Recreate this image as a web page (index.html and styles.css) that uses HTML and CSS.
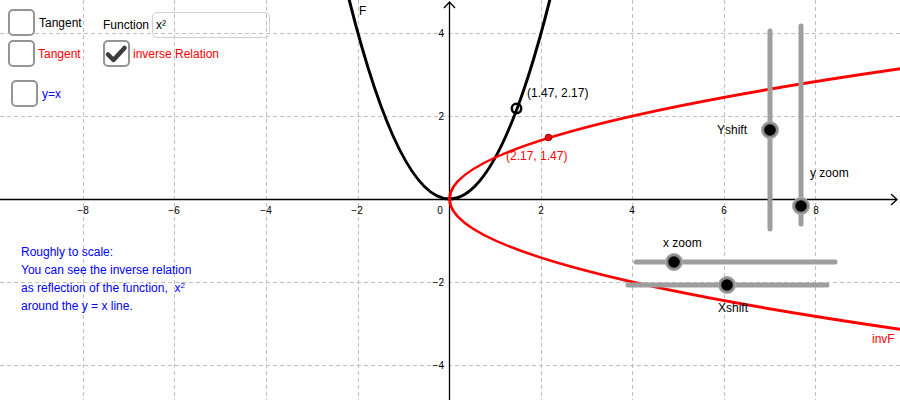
FILE: index.html
```html
<!DOCTYPE html>
<html>
<head>
<meta charset="utf-8">
<link rel="stylesheet" href="styles.css">
</head>
<body>
<div class="applet">
  <svg class="graph" width="900" height="400" viewBox="0 0 900 400" xmlns="http://www.w3.org/2000/svg">
    <g class="grid">
      <line x1="83.5" y1="0" x2="83.5" y2="400"/>
      <line x1="174.5" y1="0" x2="174.5" y2="400"/>
      <line x1="266.5" y1="0" x2="266.5" y2="400"/>
      <line x1="358.5" y1="0" x2="358.5" y2="400"/>
      <line x1="541.5" y1="0" x2="541.5" y2="400"/>
      <line x1="632.5" y1="0" x2="632.5" y2="400"/>
      <line x1="724.5" y1="0" x2="724.5" y2="400"/>
      <line x1="815.5" y1="0" x2="815.5" y2="400"/>
      <line x1="0" y1="33.5" x2="900" y2="33.5"/>
      <line x1="0" y1="116.5" x2="900" y2="116.5"/>
      <line x1="0" y1="282.5" x2="900" y2="282.5"/>
      <line x1="0" y1="365.5" x2="900" y2="365.5"/>
    </g>
    <g class="axes">
      <line x1="0" y1="199.5" x2="897" y2="199.5"/>
      <polyline points="891,194 897,199.5 891,205"/>
      <line x1="449.5" y1="400" x2="449.5" y2="2"/>
      <polyline points="444,8 449.5,2 455,8"/>
    </g>
    <g class="ticks">
      <text x="83" y="214" text-anchor="middle">−8</text>
      <text x="174" y="214" text-anchor="middle">−6</text>
      <text x="266" y="214" text-anchor="middle">−4</text>
      <text x="357" y="214" text-anchor="middle">−2</text>
      <text x="440" y="214" text-anchor="middle">0</text>
      <text x="541" y="214" text-anchor="middle">2</text>
      <text x="632" y="214" text-anchor="middle">4</text>
      <text x="724" y="214" text-anchor="middle">6</text>
      <text x="816" y="214" text-anchor="middle">8</text>
      <text x="444" y="37" text-anchor="end">4</text>
      <text x="444" y="120" text-anchor="end">2</text>
      <text x="444" y="286" text-anchor="end">−2</text>
      <text x="444" y="369" text-anchor="end">−4</text>
    </g>
    <path class="curve-f" d="M348.74,-1.86 Q449.5,399.86 550.26,-1.86"/>
    <path class="curve-inv" d="M918.5,331.8 Q-19.5,199 918.5,66.2"/>
    <circle class="open-pt" cx="516.5" cy="108.5" r="4.7"/>
    <circle class="red-pt" cx="548.5" cy="137.5" r="3.3"/>
    <g class="sliders">
      <line x1="770" y1="31" x2="770" y2="229"/>
      <line x1="801" y1="26" x2="801" y2="224"/>
      <line x1="636" y1="262" x2="835" y2="262"/>
      <line x1="628" y1="285" x2="827" y2="285"/>
    </g>
    <g class="knobs">
      <circle class="ring" cx="770" cy="130" r="8.6"/>
      <circle class="dot" cx="770" cy="130" r="5.8"/>
      <circle class="ring" cx="801" cy="206" r="8.6"/>
      <circle class="dot" cx="801" cy="206" r="5.8"/>
      <circle class="ring" cx="674" cy="262" r="8.6"/>
      <circle class="dot" cx="674" cy="262" r="5.8"/>
      <circle class="ring" cx="727" cy="285" r="8.6"/>
      <circle class="dot" cx="727" cy="285" r="5.8"/>
    </g>
    <g class="labels">
      <text x="359" y="15">F</text>
      <text x="527" y="97">(1.47, 2.17)</text>
      <text class="red" x="506" y="160">(2.17, 1.47)</text>
      <text x="717" y="134">Yshift</text>
      <text x="810" y="177">y zoom</text>
      <text x="663" y="247">x zoom</text>
      <text x="718" y="312">Xshift</text>
      <text class="red" x="872" y="343">invF</text>
    </g>
  </svg>

  <div class="widget w-tangent1">
    <span class="box"></span><span class="lbl">Tangent</span>
  </div>
  <div class="widget w-function">
    <span class="lbl">Function</span><span class="input">x²</span>
  </div>
  <div class="widget w-tangent2">
    <span class="box"></span><span class="lbl red">Tangent</span>
  </div>
  <div class="widget w-inverse">
    <span class="box checked"><svg width="27" height="27" viewBox="0 0 27 27"><polyline points="5,14.5 10.5,20 21.5,8"/></svg></span><span class="lbl red">inverse Relation</span>
  </div>
  <div class="widget w-yx">
    <span class="box"></span><span class="lbl blue">y=x</span>
  </div>

  <div class="note">
    <p>Roughly to scale:</p>
    <p>You can see the inverse relation</p>
    <p>as reflection of the function,&nbsp; x<sup>2</sup></p>
    <p>around the y = x line.</p>
  </div>
</div>
</body>
</html>
```
FILE: styles.css
```css
html, body {
  margin: 0;
  padding: 0;
  background: #ffffff;
}
body {
  font-family: "Liberation Sans", Arial, sans-serif;
  font-size: 12px;
  color: #000;
}
.applet {
  position: relative;
  width: 900px;
  height: 400px;
  overflow: hidden;
}
.graph {
  display: block;
}
.grid line {
  stroke: #c0c0c0;
  stroke-width: 1;
  stroke-dasharray: 4 3;
}
.axes line, .axes polyline {
  stroke: #000;
  stroke-width: 1.3;
  fill: none;
}
.ticks text {
  font-family: "Liberation Sans", Arial, sans-serif;
  font-size: 10px;
  fill: #000;
}
.curve-f {
  fill: none;
  stroke: #000;
  stroke-width: 3;
}
.curve-inv {
  fill: none;
  stroke: #ff0000;
  stroke-width: 3;
}
.open-pt {
  fill: none;
  stroke: #000;
  stroke-width: 2.5;
}
.red-pt {
  fill: #ff0000;
  stroke: #8a0000;
  stroke-width: 1;
}
.sliders line {
  stroke: #9e9e9e;
  stroke-width: 5;
  stroke-linecap: round;
}
.knobs .ring {
  fill: #8c8c8c;
  stroke: #b4b4b4;
  stroke-width: 1;
}
.knobs .dot {
  fill: #000;
}
.labels text {
  font-family: "Liberation Sans", Arial, sans-serif;
  font-size: 12px;
  fill: #000;
}
.labels text.red {
  fill: #ff0000;
}

.widget {
  position: absolute;
  display: flex;
  align-items: center;
  gap: 4px;
  height: 27px;
}
.w-tangent1 { left: 8px; top: 9px; }
.w-function { left: 103px; top: 11px; gap: 3px; }
.w-tangent2 { left: 8px; top: 40px; gap: 3px; }
.w-inverse { left: 103px; top: 40px; gap: 3px; }
.w-yx { left: 11px; top: 80px; }

.box {
  box-sizing: border-box;
  width: 27px;
  height: 27px;
  border: 2px solid #959595;
  border-radius: 5px;
  background: #fff;
  display: flex;
}
.box svg {
  margin: -2px;
}
.box polyline {
  fill: none;
  stroke: #3c3c3c;
  stroke-width: 4.5;
  stroke-linecap: round;
  stroke-linejoin: round;
}
.lbl {
  font-size: 12px;
  white-space: nowrap;
}
.red { color: #ff0000; }
.blue { color: #0000ff; }
.input {
  box-sizing: border-box;
  width: 118px;
  height: 26px;
  border: 1px solid #d0d0d0;
  border-radius: 5px;
  padding: 0 3px;
  display: flex;
  align-items: center;
  font-size: 12px;
}

.note {
  position: absolute;
  left: 21px;
  top: 243px;
  color: #0000ff;
  font-size: 12px;
  line-height: 18px;
}
.note p {
  margin: 0;
  white-space: nowrap;
}
.note sup {
  font-size: 8px;
  line-height: 0;
  vertical-align: 4px;
}
```
